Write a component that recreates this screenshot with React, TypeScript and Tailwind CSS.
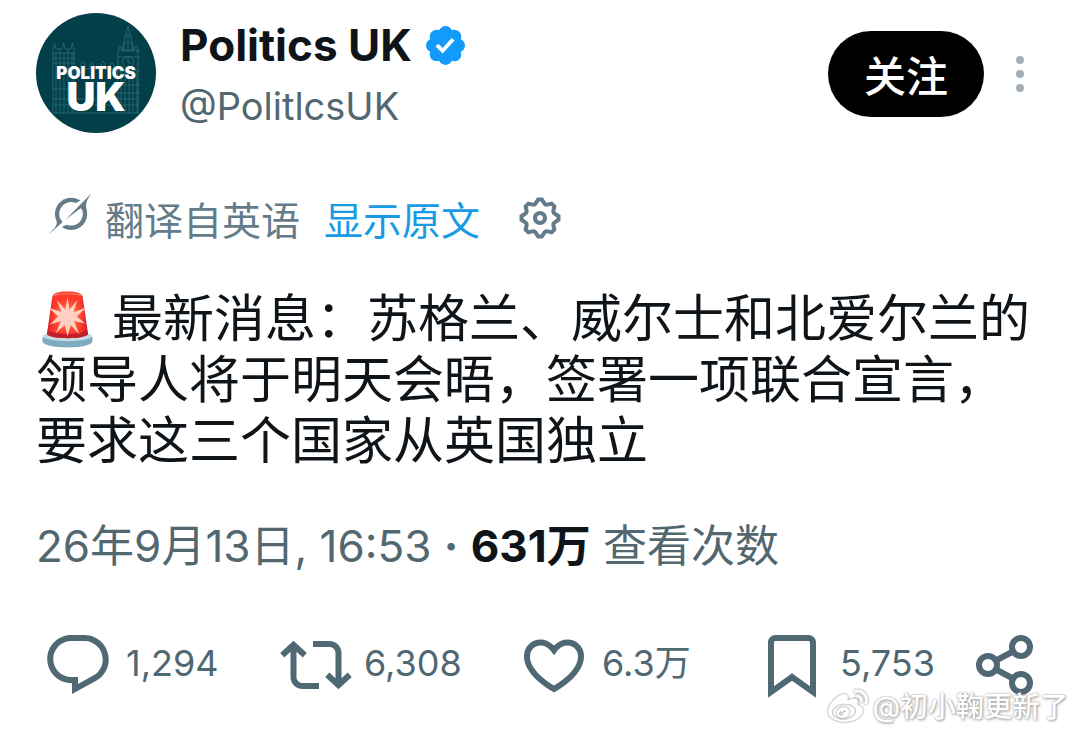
import React from "react";
import { FaWeibo } from "react-icons/fa";

const REPLY =
  "M1.751 10c0-4.42 3.584-8 8.005-8h4.366c4.49 0 8.129 3.64 8.129 8.13 0 2.96-1.607 5.68-4.196 7.11l-8.054 4.46v-3.69h-.067c-4.49.1-8.183-3.51-8.183-8.01zm8.005-6c-3.317 0-6.005 2.69-6.005 6 0 3.37 2.77 6.08 6.138 6.01l.351-.01h1.761v2.3l5.087-2.81c1.951-1.08 3.163-3.13 3.163-5.36 0-3.39-2.744-6.13-6.129-6.13H9.756z";
const REPOST =
  "M4.5 3.88l4.432 4.14-1.364 1.46L5.5 7.55V16c0 1.1.896 2 2 2H13v2H7.5c-2.209 0-4-1.79-4-4V7.55L1.432 9.48.068 8.02 4.5 3.88zM16.5 6H11V4h5.5c2.209 0 4 1.79 4 4v8.45l2.068-1.93 1.364 1.46-4.432 4.14-4.432-4.14 1.364-1.46 2.068 1.93V8c0-1.1-.896-2-2-2z";
const LIKE =
  "M16.697 5.5c-1.222-.06-2.679.51-3.89 2.16l-.805 1.09-.806-1.09C9.984 6.01 8.526 5.44 7.304 5.5c-1.243.07-2.349.78-2.91 1.91-.552 1.12-.633 2.78.479 4.82 1.074 1.97 3.257 4.27 7.129 6.61 3.87-2.34 6.052-4.64 7.126-6.61 1.111-2.04 1.03-3.7.477-4.82-.561-1.13-1.666-1.84-2.908-1.91zm4.187 7.69c-1.351 2.48-4.001 5.12-8.379 7.67l-.503.3-.504-.3c-4.379-2.55-7.029-5.19-8.382-7.67-1.36-2.5-1.41-4.86-.514-6.67.887-1.79 2.647-2.91 4.601-3.01 1.651-.09 3.368.56 4.798 2.01 1.429-1.45 3.146-2.1 4.796-2.01 1.954.1 3.714 1.22 4.601 3.01.896 1.81.846 4.17-.514 6.67z";
const BOOKMARK =
  "M4 4.5C4 3.12 5.119 2 6.5 2h11C18.881 2 20 3.12 20 4.5v18.44l-8-5.71-8 5.71V4.5zM6.5 4c-.276 0-.5.22-.5.5v14.56l6-4.29 6 4.29V4.5c0-.28-.224-.5-.5-.5h-11z";
const GEAR =
  "M10.54 1.75h2.92l1.57 2.36c.11.17.32.25.53.21l2.53-.59 2.17 2.17-.58 2.54c-.05.2.04.41.21.53l2.36 1.57v2.92l-2.36 1.57c-.17.12-.26.33-.21.53l.58 2.54-2.17 2.17-2.53-.59c-.21-.04-.42.04-.53.21l-1.57 2.36h-2.92l-1.58-2.36c-.11-.17-.32-.25-.52-.21l-2.54.59-2.17-2.17.58-2.54c.05-.2-.03-.41-.21-.53l-2.35-1.57v-2.92L4.1 8.97c.18-.12.26-.33.21-.53L3.73 5.9 5.9 3.73l2.54.59c.2.04.41-.04.52-.21l1.58-2.36zm1.07 2l-.98 1.47C10.05 6.08 9 6.5 7.99 6.27l-1.46-.34-.6.6.33 1.46c.24 1.01-.18 2.07-1.05 2.64l-1.46.98v.78l1.46.98c.87.57 1.29 1.63 1.05 2.64l-.33 1.46.6.6 1.46-.34c1.01-.23 2.06.19 2.64 1.05l.98 1.47h.78l.97-1.47c.58-.86 1.63-1.28 2.65-1.05l1.45.34.61-.6-.34-1.46c-.23-1.01.18-2.07 1.05-2.64l1.47-.98v-.78l-1.47-.98c-.87-.57-1.28-1.63-1.05-2.64l.34-1.46-.61-.6-1.45.34c-1.02.23-2.07-.19-2.65-1.05l-.97-1.47h-.78zM12 10.5c-.83 0-1.5.67-1.5 1.5s.67 1.5 1.5 1.5c.82 0 1.5-.67 1.5-1.5s-.68-1.5-1.5-1.5zM8.5 12c0-1.93 1.56-3.5 3.5-3.5 1.93 0 3.5 1.57 3.5 3.5s-1.57 3.5-3.5 3.5c-1.94 0-3.5-1.57-3.5-3.5z";
const GROK =
  "M9.27 15.29l7.978-5.897c.391-.29.95-.177 1.137.272.98 2.369.542 5.215-1.41 7.169-1.951 1.954-4.667 2.382-7.149 1.406l-2.711 1.257c3.889 2.661 8.611 2.003 11.562-.953 2.341-2.344 3.066-5.539 2.388-8.42l.006.007c-.983-4.232.242-5.924 2.75-9.383.06-.082.12-.164.179-.248l-3.301 3.305v-.01L9.267 15.292M7.623 16.723c-2.792-2.67-2.31-6.801.071-9.184 1.761-1.763 4.647-2.483 7.166-1.425l2.705-1.25a7.808 7.808 0 00-1.829-1A8.975 8.975 0 005.984 5.83c-2.533 2.536-3.33 6.436-1.962 9.764 1.022 2.487-.653 4.246-2.34 6.022-.599.63-1.199 1.259-1.682 1.925l7.62-6.815";
const VERIFIED =
  "M20.396 11c-.018-.646-.215-1.275-.57-1.816-.354-.54-.852-.972-1.438-1.246.223-.607.27-1.264.14-1.897-.131-.634-.437-1.218-.882-1.687-.47-.445-1.053-.75-1.687-.882-.633-.13-1.29-.083-1.897.14-.273-.587-.704-1.086-1.245-1.44S11.647 1.62 11 1.604c-.646.017-1.273.213-1.813.568s-.969.854-1.24 1.44c-.608-.223-1.267-.272-1.902-.14-.635.13-1.22.436-1.69.882-.445.47-.749 1.055-.878 1.688-.13.633-.08 1.29.144 1.896-.587.274-1.087.705-1.443 1.245-.356.54-.555 1.17-.574 1.817.02.647.218 1.276.574 1.817.356.54.856.972 1.443 1.245-.224.606-.274 1.263-.144 1.896.13.634.433 1.218.877 1.688.47.443 1.054.747 1.687.878.633.132 1.29.084 1.897-.136.274.586.705 1.084 1.246 1.439.54.354 1.17.551 1.816.569.647-.016 1.276-.213 1.817-.567s.972-.854 1.245-1.44c.604.239 1.266.296 1.903.164.636-.132 1.22-.447 1.68-.907.46-.46.776-1.044.908-1.681s.075-1.299-.165-1.903c.586-.274 1.084-.705 1.439-1.246.354-.54.551-1.17.569-1.816zM9.662 14.85l-3.429-3.428 1.293-1.302 2.072 2.072 4.4-4.794 1.347 1.246z";

function Glyph({ d, className }: { d: string; className: string }) {
  return (
    <svg viewBox="0 0 24 24" fill="currentColor" aria-hidden="true" className={className}>
      <path d={d} />
    </svg>
  );
}

function Avatar() {
  return (
    <a
      href="#profile"
      aria-label="Politics UK"
      className="relative flex size-[120px] shrink-0 flex-col items-center overflow-hidden rounded-full bg-[#033f49] pt-[53px] text-white"
    >
      <svg
        viewBox="0 0 120 120"
        fill="none"
        stroke="#2b7078"
        strokeWidth="0.8"
        aria-hidden="true"
        className="absolute inset-0 size-full"
      >
        <path d="M17 100V36l1.500-5 1.500 5h6l1.500-6 1.500 6h6l1.500-6 1.500 6v64M17 40h22M17 45h22M17 50h22M20 40v60M24 36v64M28 40v60M32 36v64M36 40v60M17 86h86M17 92h86M17 100h86M17 76h22" />
        <path d="M82 100V38l2-5 2 4 4-16 2-8 2 8 4 16 2-4 2 5v62M82 38h22M82 44h22M82 58h22M86 37l12 0M88 30h8M90 22h4M92 22v15M88 30v7M96 30v7M85 58v42M89 58v42M93 58v42M97 58v42M101 58v42M82 72h22M82 80h22" />
        <circle cx="92" cy="49" r="5.500" />
        <path d="M92 45v4l3 1M45 56v-5l2-3 2 3v5M54 56v-4l2-3 2 3v4M65 56v-5l2-3 2 3v5M74 56v-4l2-2 2 2v4M39 56h43" />
      </svg>
      <span className="relative text-[17px] leading-[14px] font-black">POLITICS</span>
      <span className="relative text-[40px] leading-[34px] font-black">UK</span>
    </a>
  );
}

function Siren() {
  return (
    <svg viewBox="0 0 52 58" role="img" aria-label="🚨" className="mr-[19px] ml-[6px] inline-block h-[57px] w-[51px] align-[-11px]">
      <defs>
        <linearGradient id="dome" x1="0" x2="1" y1="0" y2="0">
          <stop offset="0" stopColor="#d9202a" />
          <stop offset="0.2" stopColor="#ff3a2d" />
          <stop offset="0.8" stopColor="#ff3a2d" />
          <stop offset="1" stopColor="#cf1f2c" />
        </linearGradient>
        <radialGradient id="glow">
          <stop offset="0" stopColor="#ffab91" />
          <stop offset="0.5" stopColor="#ff6a3c" />
          <stop offset="1" stopColor="#ff3a2d" stopOpacity="0" />
        </radialGradient>
      </defs>
      <path d="M0.500 48c0-4 11-5.500 25.500-5.500S51.500 44 51.500 48v3c0 4-11 6.500-25.500 6.500S0.500 55 0.500 51z" fill="#7fabbf" />
      <ellipse cx="26" cy="46" rx="25" ry="5" fill="#c3dbe4" />
      <path d="M5 44L10.500 6C11.500 2 16 .5 26 .5S40.500 2 41.500 6L47 44c-3 3-11 4-21 4S8 47 5 44z" fill="url(#dome)" />
      <path d="M6 40c6 4.500 34 4.500 40 0l1 4c-3 3-11 4-21 4S8 47 5 44z" fill="#c3202b" />
      <ellipse cx="26" cy="26" rx="19" ry="20" fill="url(#glow)" />
      <path d="M12 4.500c6-2.500 22-2.500 28 0" fill="none" stroke="#ff7a63" strokeWidth="1.500" />
      <path
        d="M26 6l2 13L36 9l-3.800 12.300L45 17l-9.500 9L44 33l-11.300-2.500L38 44l-8.800-9.500L26 46l-2.700-11.500L14 43l5.300-12.500L8 34l8.500-8L7 17l12.800 4.300L15 9l8.800 10z"
        fill="#ffcfc2"
      />
    </svg>
  );
}

function ShareIcon() {
  return (
    <svg viewBox="0 0 72 72" fill="none" stroke="currentColor" strokeWidth="6" aria-hidden="true" className="size-[72px]">
      <circle cx="52" cy="18" r="9" />
      <circle cx="19" cy="36" r="9" />
      <circle cx="52" cy="54" r="9" />
      <path d="M27 31.500l17-9M27 40.500l17 9" />
    </svg>
  );
}

const ACTIONS = [
  { label: "回复", d: REPLY, count: "1,294" },
  { label: "转帖", d: REPOST, count: "6,308" },
  { label: "喜欢", d: LIKE, count: "6.3万" },
  { label: "书签", d: BOOKMARK, count: "5,753" },
];

export default function App() {
  return (
    <main className="relative min-h-screen bg-white font-['Inter','Noto_Sans_CJK_SC',sans-serif] text-[#0f1419]">
      <article lang="zh-CN" className="flex flex-col px-9 pt-[13px]">
        <header className="flex items-start pr-3">
          <Avatar />
          <div className="ml-6 flex min-w-0 flex-1 flex-col">
            <div className="flex items-center gap-[14px] pt-1">
              <h1 className="text-[44px] leading-[56px] font-bold">Politics UK</h1>
              <svg viewBox="1.6 1.6 18.8 18.8" fill="#129bfa" role="img" aria-label="已认证" className="size-[39px] shrink-0">
                <path d={VERIFIED} />
              </svg>
            </div>
            <p className="text-[38px] leading-[66px] text-[#526770]">@PolitlcsUK</p>
          </div>
          <div className="flex items-center gap-6 pt-[18px]">
            <button type="button" className="h-[86px] w-[156px] rounded-full bg-black pt-1 text-[42px] font-medium text-white">
              关注
            </button>
            <button type="button" aria-label="更多" className="flex h-[86px] w-6 items-center justify-center text-[#a3afb8]">
              <svg viewBox="0 0 8 36" fill="currentColor" aria-hidden="true" className="h-9 w-2">
                <circle cx="4" cy="4" r="4" />
                <circle cx="4" cy="18" r="4" />
                <circle cx="4" cy="32" r="4" />
              </svg>
            </button>
          </div>
        </header>

        <div className="mt-[52px] flex h-[60px] items-center pl-[13px] text-[39px] text-[#647c89]">
          <Glyph d={GROK} className="mb-4 size-[43px]" />
          <span className="ml-[13px]">翻译自英语</span>
          <a href="#original" className="ml-6 text-[#189be3]">
            显示原文
          </a>
          <button type="button" aria-label="翻译设置" className="mb-[6px] ml-9">
            <Glyph d={GEAR} className="size-12" />
          </button>
        </div>

        <p className="mt-[37px] text-[51px] leading-[61px]">
          <Siren />
          最新消息：苏格兰、威尔士和北爱尔兰的领导人将于明天会晤，签署一项联合宣言，要求这三个国家从英国独立
        </p>

        <p className="mt-[43px] text-[44px] leading-[64px] text-[#526770]">
          26年9月13日, 16:53 <span className="font-bold">·</span> <strong className="font-bold text-[#0f1419]">631万</strong> 查看次数
        </p>

        <div className="mt-[51px] grid grid-cols-[238fr_238fr_238fr_213fr_72px] pr-[3px] pl-[6px] text-[#4f6873]">
          {ACTIONS.map((a) => (
            <button key={a.label} type="button" aria-label={`${a.label} ${a.count}`} className="flex items-center gap-3 text-[36px]">
              <Glyph d={a.d} className="size-[72px] shrink-0" />
              <span className="-mt-1">{a.count}</span>
            </button>
          ))}
          <button type="button" aria-label="分享">
            <ShareIcon />
          </button>
        </div>
      </article>

      <div className="absolute right-3 bottom-[5px] flex items-center gap-1 text-[28px] leading-[36px] font-medium text-white [text-shadow:0_0_2px_#9a9a9a,1px_1px_3px_#a0a0a0]">
        <FaWeibo aria-hidden="true" className="size-10 drop-shadow-[0_0_1px_#777777]" />
        <span>@初小鞠更新了</span>
      </div>
    </main>
  );
}
